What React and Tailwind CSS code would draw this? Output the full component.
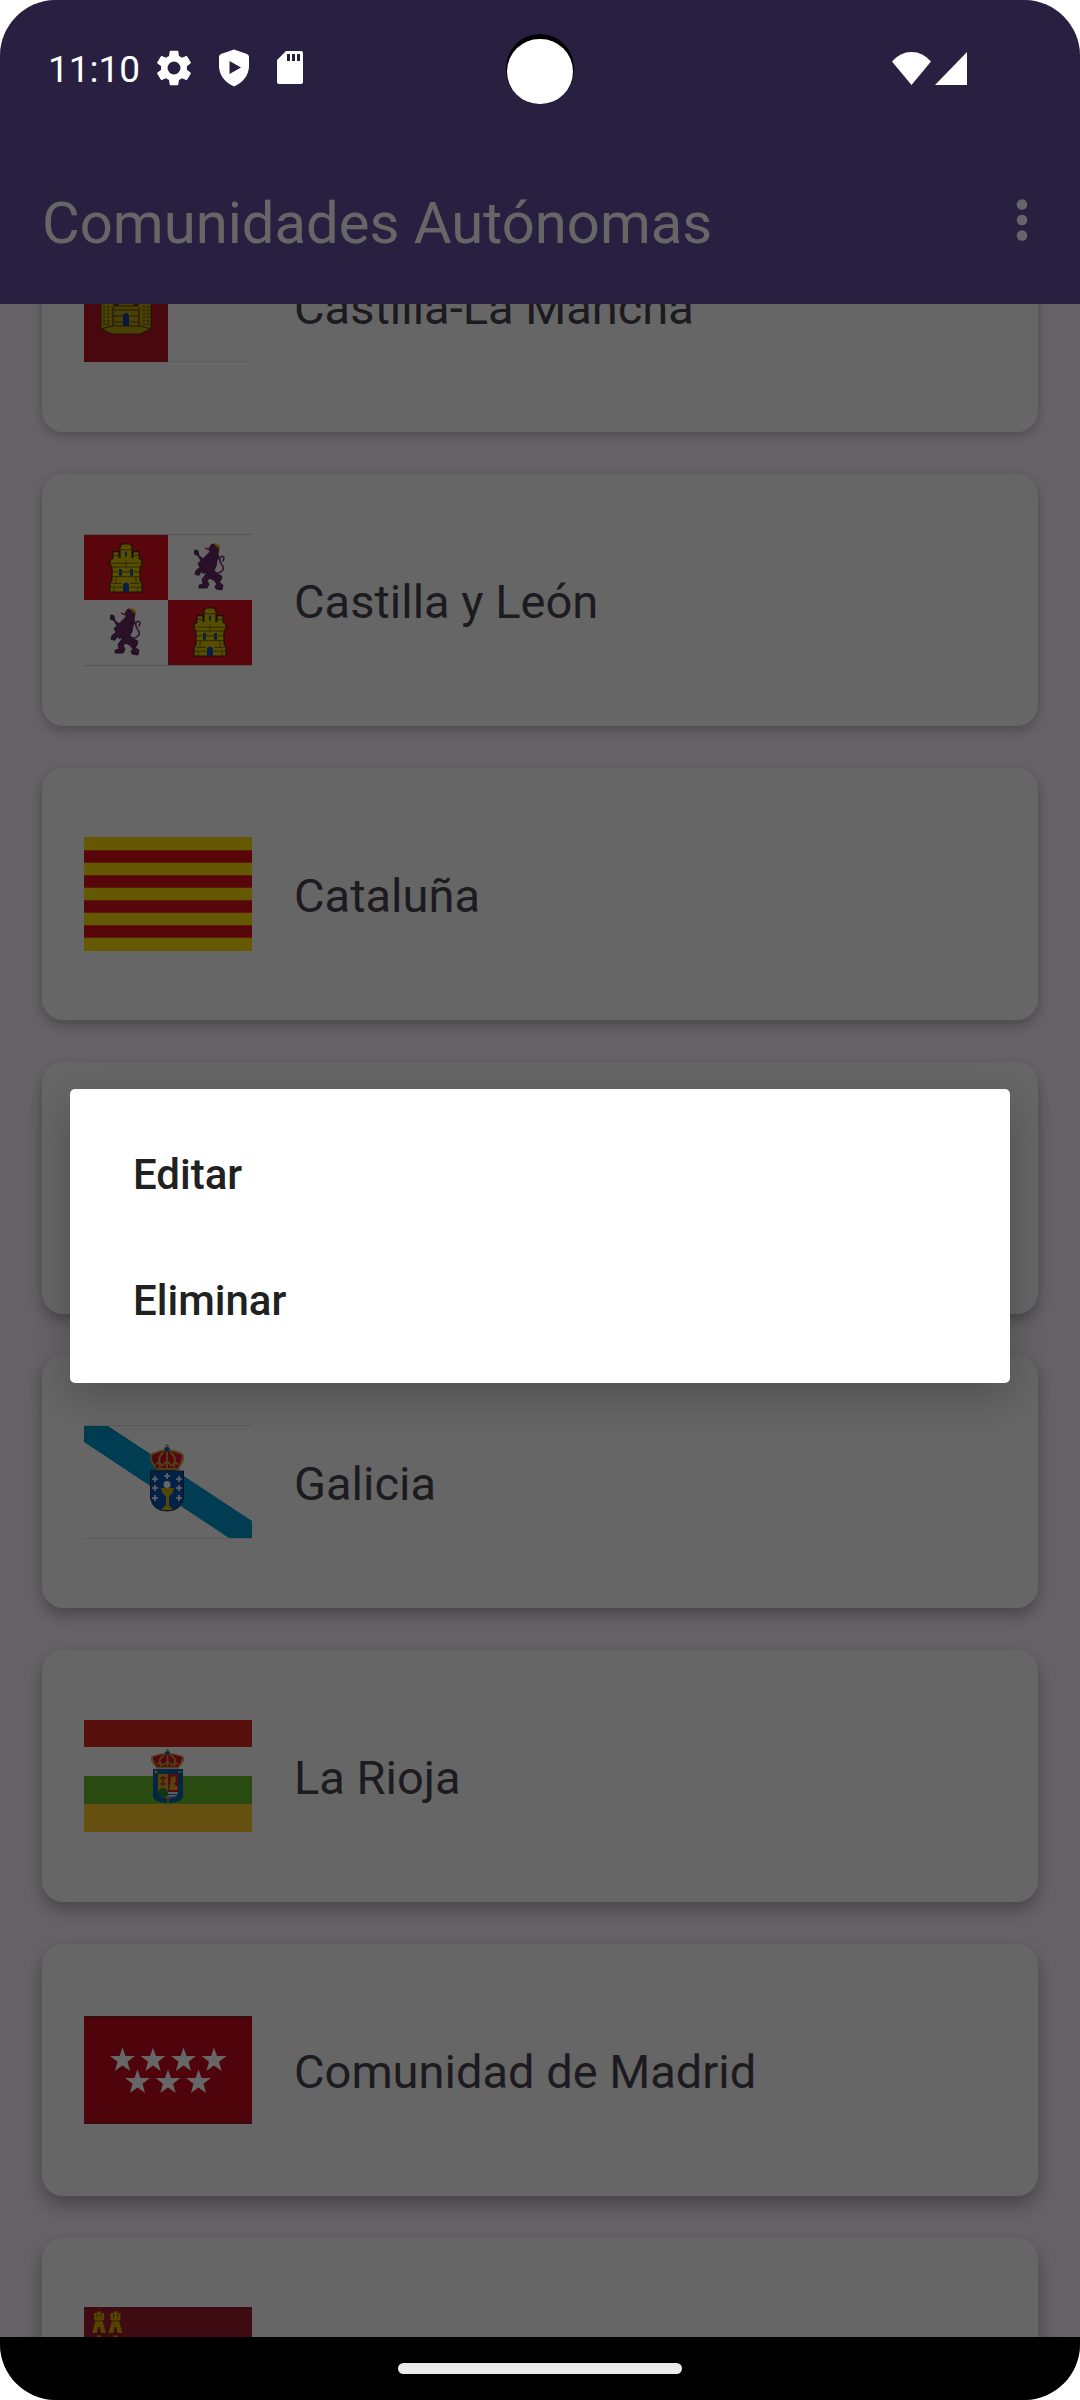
import React from "react";

const CASTLE = "M8 50 V40 L10 38 V24 L8 22 V17 L11 15 V8 H17 V14 H18 V3 L20 0 H28 L30 3 V14 H31 V8 H37 V15 L40 17 V22 L38 24 V38 L40 40 V50 Z";

function Castle({ x, y, w, h }) {
  return (
    <svg x={x} y={y} width={w} height={h} viewBox="7 -1 34 52" preserveAspectRatio="none">
      <path d={CASTLE} fill="#d9c400" stroke="#3a2a10" strokeWidth="1.2" />
      <g stroke="#5a4a08" strokeWidth="0.8" fill="none">
        <path d="M8 20H40M10 24H38M10 29H16M20 29H28M32 29H38M10 34H38M8 41H20M28 41H40M8 45H20M28 45H40M11 12H17M31 12H37M18 6H30M24 17V24M14 34V41M34 34V41M12 45V50M36 45V50" />
      </g>
      <path d="M17 26h3v7h-3zM28 26h3v7h-3zM23 8h2v5h-2zM21 50V42q3-4 6 0V50z" fill="#1b4fb0" />
    </svg>
  );
}

function Lion({ x, y, w, h }) {
  return (
    <svg x={x} y={y} width={w} height={h} viewBox="0 0 31 49" preserveAspectRatio="none">
      <path
        d="M15 5L18 1L23 2L25 6L24 11L25 15L23 18L22 24L20 28L23 31L28 34L27 38L25 40L29 43L28 48L22 47L21 44L23 42L20 38L16 36L13 38L15 42L13 46L5 46L5 43L9 42L8 37L11 33L13 30L9 31L7 29L5 33L1 32L2 28L6 25L4 21L7 18L4 13L0 11L1 7L4 8L5 13L9 16L13 12L16 9Z"
        fill="#6b2a66"
        stroke="#3c1740"
        strokeWidth="0.8"
      />
      <path d="M22 31Q31 29 29 24Q25 19 26 15Q28 12 30 15L29 19" fill="none" stroke="#6b2a66" strokeWidth="1.5" />
      <path d="M20 1L22 0L25 2L27 5L24 5Z" fill="#d9c400" />
      <path d="M11 5L15 7" stroke="#c8102e" strokeWidth="1.5" />
    </svg>
  );
}

function Crown({ x, y, w, h }) {
  return (
    <svg x={x} y={y} width={w} height={h} viewBox="1 0 30 25" preserveAspectRatio="none">
      <path d="M6 24L3 14Q1 8 7 8Q11 5 16 7Q21 5 25 8Q31 8 29 14L26 24Z" fill="#d3122b" />
      <g fill="none" stroke="#c9a830" strokeWidth="1.6">
        <path d="M6 22Q-3 10 6 8Q12 5 16 7Q20 5 26 8Q35 10 26 22" />
        <path d="M10 22Q7 11 13 8M22 22Q25 11 19 8M16 22V6" />
        <path d="M6 19L9 17L12 20L16 16L20 20L23 17L26 19M6 23H26" />
      </g>
      <circle cx="16" cy="5" r="2.4" fill="#25589c" />
      <path d="M16 0V3M14.5 1.5H17.5" stroke="#c9a830" />
    </svg>
  );
}

const FLAG = "block h-auto w-full";

function FlagLaMancha() {
  return (
    <svg viewBox="0 0 168 112" className={FLAG} aria-hidden="true">
      <rect width="168" height="112" fill="#fff" />
      <rect width="84" height="112" fill="#b61423" />
      <path d="M17 50H22V53H25V50H30V56H34V30H38V33H46V30H50V56H54V50H59V53H62V50H67V79L56 84H28L17 79Z" fill="#b8a010" stroke="#3f3408" />
      <path
        d="M17 79L28 76H56L67 79M29 57V76M55 57V76M34 56H50M30 60H54M30 72H39M46 72H54M30 66H39M46 66H54"
        fill="none"
        stroke="#4a3d08"
        strokeWidth="1.2"
      />
      <path d="M20 56V77M24 56V76M60 56V76M64 56V77" stroke="#4a3d08" strokeDasharray="1.5 2" strokeWidth="1.5" />
      <path d="M39 76V67Q39 63 42 63T45 67V76Z" fill="#12409c" />
      <path d="M84 111.5H168" stroke="#e8e8e8" />
    </svg>
  );
}

function FlagLeon() {
  return (
    <svg viewBox="0 0 168 132" className={FLAG} aria-hidden="true">
      <rect width="168" height="132" fill="#fff" />
      <rect y="1" width="84" height="65" fill="#dc0d1c" />
      <rect x="84" y="66" width="84" height="65" fill="#dc0d1c" />
      <path d="M0 .5H168M0 131.5H168" stroke="#d0d0d0" />
      <Castle x={25} y={9} w={34} h={50} />
      <Castle x={109} y={73} w={34} h={50} />
      <Lion x={110} y={9} w={31} h={48} />
      <Lion x={26} y={74} w={31} h={48} />
    </svg>
  );
}

function FlagCataluna() {
  return (
    <svg viewBox="0 0 168 114" className={FLAG} aria-hidden="true">
      <rect width="168" height="114" fill="#fcdd09" />
      <path d="M0 19.5H168M0 44.5H168M0 69.5H168M0 94.5H168" stroke="#da121a" strokeWidth="12.5" />
    </svg>
  );
}

function FlagGalicia() {
  const crosses = [[71, 54], [95, 54], [71, 63], [95, 63], [71, 73], [95, 73], [83, 51]];
  return (
    <svg viewBox="0 0 168 114" className={FLAG} aria-hidden="true">
      <rect width="168" height="114" fill="#fff" />
      <path d="M0 1H24L168 96V113H145L0 17Z" fill="#0099cc" />
      <path d="M0 .5H168M0 113.5H168" stroke="#e0e0e0" />
      <Crown x={66} y={19} w={34} h={27} />
      <path d="M66.5 46H99.5V73Q97 86 83 86Q69 86 66.5 73Z" fill="#0b56b3" stroke="#2c2c48" />
      {crosses.map(([x, y]) => (
        <path key={x + "-" + y} d={`M${x - 3} ${y}h6M${x} ${y - 3}v6`} stroke="#fff" strokeWidth="1.6" />
      ))}
      <circle cx="83" cy="59.5" r="3.5" fill="#fff" />
      <path d="M77 63H90Q89 69 85 71V80L89 85H77L82 80V71Q78 69 77 63Z" fill="#d2b410" />
    </svg>
  );
}

function FlagRioja() {
  return (
    <svg viewBox="0 0 168 114" className={FLAG} aria-hidden="true">
      <rect width="168" height="114" fill="#fff" />
      <rect y="1" width="168" height="27" fill="#dc2a20" />
      <rect y="57" width="168" height="28" fill="#66b92a" />
      <rect y="85" width="168" height="28" fill="#fdc82f" />
      <Crown x={67} y={30} w={33} h={20} />
      <path d="M69 50H99V78Q98 83 84 84Q70 83 69 78Z" fill="#0c5fa8" />
      <path d="M74 55H84V79Q74 80 74 72Z" fill="#dca51e" />
      <path d="M84 55H94V73H84Z" fill="#d3202b" />
      <path d="M84 73H94Q94 79 84 79Z" fill="#dfe8f5" />
      <path d="M84 75.5H93M84 78H91" stroke="#2b62a8" />
      <path d="M85 71L86 66L87 58L91 57L92 62L90 65L94 68L93 71Z" fill="#dca51e" />
      <path d="M79 57V67M76 59H82M76 65H82" stroke="#a83b28" strokeWidth="1.5" />
      <circle cx="79" cy="74" r="5" fill="#1f8a3c" />
      <path d="M70 53H74M72 51V55M94 53H98M84 79V85" stroke="#c9a830" strokeWidth="1.5" />
    </svg>
  );
}

const STAR = "M0 -12.5L3 -4H12.5L5 1.7L7.6 11L0 5.5L-7.6 11L-5 1.7L-12.5 -4H-3Z";

function FlagMadrid() {
  const stars = [[38.5, 44], [69, 44], [99.5, 44], [130, 44], [53.5, 66], [84, 66], [114.5, 66]];
  return (
    <svg viewBox="0 0 168 108" className={FLAG} aria-hidden="true">
      <rect width="168" height="108" fill="#c6081b" />
      <path d="M0 .5H168M0 107.5H168" stroke="#6b2028" />
      {stars.map(([x, y]) => (
        <path key={x} d={STAR} transform={`translate(${x} ${y})`} fill="#fff" />
      ))}
    </svg>
  );
}

function FlagMurcia() {
  return (
    <svg viewBox="0 0 168 114" className={FLAG} aria-hidden="true">
      <rect width="168" height="114" fill="#9c1c31" />
      {[[15, 17], [31.5, 17], [15, 41], [31.5, 41]].map(([x, y]) => (
        <g key={x + "-" + y} transform={`translate(${x} ${y})`}>
          <path d="M-5 -9V-11H-2V-12.5H2V-11H5V-4H4V-1L7 9H2L1 3H-1L-2 9H-7L-4 -1V-4H-5Z" fill="#d8a800" />
          <path d="M-4 -3H4M-2 -10V-6M2 -10V-6" stroke="#7a4c10" />
        </g>
      ))}
    </svg>
  );
}

const COMMUNITIES = [
  { id: "clm", name: "Castilla-La Mancha", Flag: FlagLaMancha, shadow: "shadow-[0_3px_12px_rgba(0,0,0,0.25)]" },
  { id: "cyl", name: "Castilla y León", Flag: FlagLeon, shadow: "shadow-[0_4px_12px_rgba(0,0,0,0.26)]" },
  { id: "cat", name: "Cataluña", Flag: FlagCataluna, shadow: "shadow-[0_5px_13px_rgba(0,0,0,0.28)]" },
  { id: "ext", shadow: "shadow-[0_6px_14px_rgba(0,0,0,0.29)]" },
  { id: "gal", name: "Galicia", Flag: FlagGalicia, shadow: "shadow-[0_7px_16px_rgba(0,0,0,0.3)]" },
  { id: "rio", name: "La Rioja", Flag: FlagRioja, shadow: "shadow-[0_8px_18px_rgba(0,0,0,0.31)]" },
  { id: "mad", name: "Comunidad de Madrid", Flag: FlagMadrid, shadow: "shadow-[0_9px_20px_rgba(0,0,0,0.32)]" },
  { id: "mur", Flag: FlagMurcia, shadow: "shadow-[0_10px_20px_rgba(0,0,0,0.32)]" },
];

function StatusBar() {
  return (
    <div className="absolute inset-x-0 top-0 z-20 flex h-[136px] items-center justify-between pr-[113px] pl-12 text-white">
      <div className="flex items-center gap-4">
        <span className="pt-1 text-[37px] leading-[44px]">11:10</span>
        <svg viewBox="2 2 20 20" className="h-9 w-9" fill="currentColor" aria-hidden="true">
          <path d="M19.14 12.94c.04-.3.06-.61.06-.94 0-.32-.02-.64-.07-.94l2.03-1.58a.49.49 0 0 0 .12-.61l-1.92-3.32a.49.49 0 0 0-.59-.22l-2.39.96a7 7 0 0 0-1.62-.94l-.36-2.54a.48.48 0 0 0-.48-.41h-3.84a.48.48 0 0 0-.47.41l-.36 2.54c-.59.24-1.13.57-1.62.94l-2.39-.96a.48.48 0 0 0-.59.22L2.74 8.87a.47.47 0 0 0 .12.61l2.03 1.58c-.05.3-.09.63-.09.94s.02.64.07.94l-2.03 1.58a.49.49 0 0 0-.12.61l1.92 3.32c.12.22.37.29.59.22l2.39-.96c.5.38 1.03.7 1.62.94l.36 2.54c.05.24.24.41.48.41h3.84c.24 0 .44-.17.47-.41l.36-2.54a7 7 0 0 0 1.62-.94l2.39.96c.22.08.47 0 .59-.22l1.92-3.32a.47.47 0 0 0-.12-.61zM12 15.6a3.6 3.6 0 1 1 0-7.2 3.6 3.6 0 0 1 0 7.2z" />
        </svg>
        <svg viewBox="0 0 36 38" className="ml-2 h-[38px] w-9" fill="currentColor" aria-hidden="true">
          <path fillRule="evenodd" d="M18 .5L31 5Q33 6 33 8V18Q32 31 18 37.5Q4 31 3 18V8Q3 6 5 5ZM13.5 12V25L25 18.5Z" />
        </svg>
        <svg viewBox="0 0 36 34" className="ml-1 h-[34px] w-9" fill="currentColor" aria-hidden="true">
          <path fillRule="evenodd" d="M14 0H29Q31 0 31 2V31Q31 33 29 33H7Q5 33 5 31V9ZM15 3V10H18V3ZM20 3V10H23V3ZM25 3V10H28V3Z" />
        </svg>
      </div>
      <div className="flex items-center gap-1">
        <svg viewBox="0 0 39 33" className="h-[33px] w-[39px]" fill="currentColor" aria-hidden="true">
          <path d="M0 9.5Q8 0 19.5 0T39 9.5L19.5 33Z" />
        </svg>
        <svg viewBox="0 0 32 33" className="h-[33px] w-8" fill="currentColor" aria-hidden="true">
          <path d="M32 0V33H0Z" />
        </svg>
      </div>
      <div className="absolute top-[34px] left-1/2 h-[70px] w-[68px] -translate-x-1/2 rounded-full bg-black pt-[5px]">
        <div className="mx-auto h-[65px] w-[66px] rounded-full bg-white" />
      </div>
    </div>
  );
}

export default function App() {
  return (
    <div className="bg-white font-[Roboto,sans-serif]">
      <div className="relative flex h-screen flex-col overflow-hidden rounded-[56px] bg-[#fef7ff]">
        <StatusBar />
        <header className="z-[1] flex shrink-0 items-center justify-between bg-[#6750a4] pt-[136px] pr-8 pl-[42px] text-white">
          <h1 className="pt-[55px] pb-[49px] text-[58px] leading-[64px]">Comunidades Autónomas</h1>
          <button type="button" aria-label="Más opciones" className="flex h-16 w-[52px] items-center justify-center">
            <svg viewBox="0 0 12 42" className="h-[42px] w-3" fill="currentColor" aria-hidden="true">
              <circle cx="6" cy="5.5" r="5.3" />
              <circle cx="6" cy="21" r="5.3" />
              <circle cx="6" cy="36.5" r="5.3" />
            </svg>
          </button>
        </header>

        <main className="min-h-0 flex-1 overflow-hidden">
          <ul className="-mt-[124px] flex flex-col gap-[42px] px-[42px]">
            {COMMUNITIES.map(({ id, name, Flag, shadow }) => (
              <li key={id} className={`flex h-[252px] shrink-0 items-center gap-[42px] rounded-[21px] bg-white px-[42px] ${shadow}`}>
                {Flag && (
                  <div className="w-[168px] shrink-0">
                    <Flag />
                  </div>
                )}
                {name && <span className="pt-1 text-[47px] leading-[56px] text-[#49454f]">{name}</span>}
              </li>
            ))}
          </ul>
        </main>

        <div className="z-20 flex h-[63px] shrink-0 items-center justify-center bg-black">
          <div className="h-[11px] w-[284px] rounded-full bg-[#ebebeb]" />
        </div>

        <div className="absolute inset-0 z-10 flex items-center bg-black/60 px-[70px] pt-[136px] pb-16">
          <div
            role="dialog"
            aria-label="Opciones"
            className="flex w-full flex-col rounded-[5px] bg-white py-[21px] shadow-[0_14px_44px_rgba(0,0,0,0.22)]"
          >
            {["Editar", "Eliminar"].map((action) => (
              <button
                key={action}
                type="button"
                className="h-[126px] px-[63px] pt-1 text-left text-[42px] leading-[50px] font-medium text-[#212121]"
              >
                {action}
              </button>
            ))}
          </div>
        </div>
      </div>
    </div>
  );
}
